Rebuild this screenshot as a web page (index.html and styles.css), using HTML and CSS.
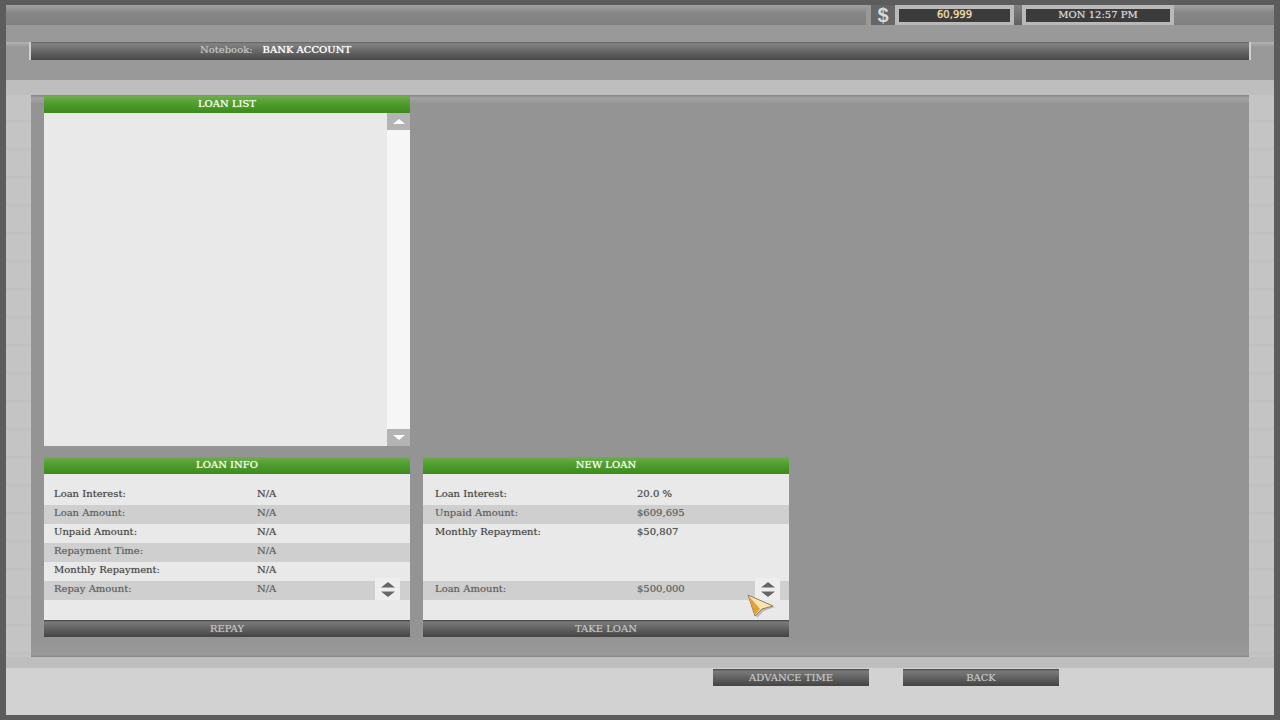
FILE: index.html
```html
<!DOCTYPE html>
<html lang="en">
<head>
  <meta charset="UTF-8" />
  <title>Bank Account</title>
  <link rel="stylesheet" href="styles.css">
</head>
<body>

  <div class="screen">
    <div class="topbar">
      <div class="currency">$</div>
      <div class="status money">60,999</div>
      <div class="status-gap"></div>
      <div class="status clock">MON 12:57 PM</div>
    </div>

    <header class="header">
      <div class="title-row">
        <div class="title-bar">
          <span class="section">Notebook:</span>
          <h1>BANK ACCOUNT</h1>
        </div>
      </div>
    </header>

    <main class="main">
      <div class="board">
        <section class="card card-list">
          <h2>LOAN LIST</h2>
          <div class="list">
            <div class="list-items"></div>
            <div class="scrollbar">
              <button type="button" aria-label="Scroll up"><svg width="12" height="5" viewBox="0 0 12 5"><path d="M6 0L12 5H0Z" fill="#fff"/></svg></button>
              <button type="button" aria-label="Scroll down"><svg width="12" height="5" viewBox="0 0 12 5"><path d="M0 0H12L6 5Z" fill="#fff"/></svg></button>
            </div>
          </div>
        </section>

        <div class="cards">
          <section class="card">
            <h2>LOAN INFO</h2>
            <div class="rows">
              <div class="row"><span>Loan Interest:</span><span>N/A</span></div>
              <div class="row"><span>Loan Amount:</span><span>N/A</span></div>
              <div class="row"><span>Unpaid Amount:</span><span>N/A</span></div>
              <div class="row"><span>Repayment Time:</span><span>N/A</span></div>
              <div class="row"><span>Monthly Repayment:</span><span>N/A</span></div>
              <div class="row">
                <label for="repay-amount">Repay Amount:</label>
                <input type="text" id="repay-amount" value="N/A" />
                <div class="stepper">
                  <button type="button" aria-label="Increase"><svg width="16" height="6" viewBox="0 0 16 6"><path d="M8 0L15 5.5H1Z" fill="#666"/></svg></button>
                  <button type="button" aria-label="Decrease"><svg width="16" height="6" viewBox="0 0 16 6"><path d="M1 .5H15L8 6Z" fill="#666"/></svg></button>
                </div>
              </div>
            </div>
            <button type="button" class="btn">REPAY</button>
          </section>

          <section class="card card-new">
            <h2>NEW LOAN</h2>
            <div class="rows">
              <div class="row"><span>Loan Interest:</span><span>20.0 %</span></div>
              <div class="row"><span>Unpaid Amount:</span><span>$609,695</span></div>
              <div class="row"><span>Monthly Repayment:</span><span>$50,807</span></div>
              <div class="row"></div>
              <div class="row"></div>
              <div class="row">
                <label for="loan-amount">Loan Amount:</label>
                <input type="text" id="loan-amount" value="$500,000" />
                <div class="stepper">
                  <button type="button" aria-label="Increase"><svg width="16" height="6" viewBox="0 0 16 6"><path d="M8 0L15 5.5H1Z" fill="#666"/></svg></button>
                  <button type="button" aria-label="Decrease"><svg width="16" height="6" viewBox="0 0 16 6"><path d="M1 .5H15L8 6Z" fill="#666"/></svg></button>
                </div>
              </div>
            </div>
            <button type="button" class="btn">TAKE LOAN</button>

            <svg class="cursor" width="30" height="26" viewBox="0 0 30 26">
              <defs>
                <linearGradient id="gold" x1="0" y1="0" x2="0" y2="1">
                  <stop offset="0" stop-color="#d9a253"/>
                  <stop offset="1" stop-color="#e89c28"/>
                </linearGradient>
              </defs>
              <path d="M2 4L28 14L17 18L10 25Z" fill="#666" opacity=".35"/>
              <path d="M1 2L26 13L15 16L8 23Z" fill="#fbe3ac" stroke="#8f7d60" stroke-width="1"/>
              <path d="M1 2L13 16L8 22Z" fill="url(#gold)"/>
            </svg>
          </section>
        </div>
      </div>
    </main>

    <footer class="footer">
      <button type="button" class="btn">ADVANCE TIME</button>
      <button type="button" class="btn">BACK</button>
    </footer>
  </div>

</body>
</html>
```
FILE: styles.css
```css
* {
  box-sizing: border-box;
}

body {
  margin: 0;
  font-family: 'DejaVu Serif', serif;
  font-size: 10px;
  color: #484848;
}

h1, h2 {
  margin: 0;
  font-size: 10px;
  font-weight: normal;
}

button, input {
  margin: 0;
  padding: 0;
  border: none;
  background: none;
  font: inherit;
  color: inherit;
  text-shadow: inherit;
}

.screen {
  display: flex;
  flex-direction: column;
  min-height: 100vh;
  border: solid #5c5c5c;
  border-width: 5px 6px;
}

/* top bar */
.topbar {
  display: flex;
  justify-content: flex-end;
  height: 20px;
  padding-right: 100px;
  background: linear-gradient(#a2a2a2, #868686 8px, #808080);
}

.currency {
  width: 29px;
  border-left: 5px solid #999;
  background: #666;
  color: #d8d8d8;
  font: bold 20px/21px 'Liberation Sans', sans-serif;
  text-align: center;
}

.status {
  width: 119px;
  border: solid #b9b9b9;
  border-width: 4px 4px 3px;
  background: #3b3b3b;
  color: #d6d6d6;
  line-height: 12px;
  text-align: center;
  text-shadow: 0 0 1px #aaa;
}

.money {
  color: #ead7a6;
  font-family: 'DejaVu Sans', sans-serif;
  text-shadow: 0 0 1px #ead7a6;
}

.clock {
  width: 152px;
}

.status-gap {
  width: 8px;
  background: linear-gradient(#808080, #606060);
}

/* header */
.header {
  height: 55px;
  padding-top: 17px;
  background: #999;
}

.title-row {
  padding: 0 23px;
  background: linear-gradient(#b2b2b2, #999 5px);
}

.title-bar {
  display: flex;
  gap: 10px;
  height: 18px;
  padding-left: 169px;
  border: solid #d0d0d0;
  border-width: 0 2px;
  background: linear-gradient(#626262, #828282 2px, #6b6b6b 8px, #484848);
  color: #c8c8c8;
  line-height: 16px;
  text-shadow: 0 0 1px #999;
}

.title-bar h1 {
  color: #fff;
  text-shadow: 0 0 1px #fff;
}

/* content */
.main {
  display: flex;
  flex: 1;
  padding: 15px 25px 11px;
  background:
    linear-gradient(#bebebe, #bebebe) top / 100% 15px no-repeat,
    linear-gradient(#bebebe, #bebebe) bottom / 100% 11px no-repeat,
    repeating-linear-gradient(#c4c4c4 0, #c4c4c4 11px, #bebebe 13px, #c4c4c4 15px, #c4c4c4 28px);
}

.board {
  display: flex;
  flex: 1;
  flex-direction: column;
  gap: 11px;
  padding: 1px 13px 20px;
  background:
    linear-gradient(#848484, #a4a4a4 3px, rgba(148, 148, 148, 0) 9px) top / 100% 10px no-repeat,
    linear-gradient(#949494, #9a9a9a 18px, #848484) bottom / 100% 20px no-repeat,
    #949494;
}

.card {
  display: flex;
  flex-direction: column;
  position: relative;
  width: 366px;
  background: #e9e9e9;
}

.card h2 {
  height: 17px;
  background: linear-gradient(#72ac50, #54a032 6px, #3d8a1c);
  color: #f0ffe8;
  line-height: 16px;
  text-align: center;
  text-shadow: 0 0 1px #e0f5d4;
}

.card-list {
  flex: 1;
}

.list {
  display: flex;
  flex: 1;
}

.list-items {
  flex: 1;
}

.scrollbar {
  display: flex;
  flex-direction: column;
  justify-content: space-between;
  width: 23px;
  background: #f6f6f6;
}

.scrollbar button {
  display: flex;
  align-items: center;
  justify-content: center;
  height: 17px;
  background: #b4b4b4;
}

.cards {
  display: flex;
  gap: 13px;
}

.rows {
  padding: 12px 0 20px;
  text-shadow: 0 0 1px #999;
}

.row {
  display: grid;
  grid-template-columns: 203px 1fr 35px;
  height: 19px;
  padding-left: 10px;
  line-height: 15px;
}

.card-new .row {
  grid-template-columns: 202px 1fr 34px;
  padding-left: 12px;
}

.row:nth-child(even) {
  background: #cfcfcf;
  color: #606060;
}

.row input {
  width: 100%;
  height: 15px;
}

.card-new .row:nth-child(4) {
  background: none;
}

.stepper {
  display: flex;
  flex-direction: column;
  align-items: center;
  justify-content: center;
  gap: 3px;
  width: 25px;
  height: 22px;
  margin-top: -3px;
  background: #eee;
}

.stepper button {
  display: block;
  height: 6px;
}

.stepper svg {
  display: block;
}

.btn {
  height: 17px;
  background: linear-gradient(#404040, #7a7a7a 2px, #646464 8px, #444);
  color: #c6c6c6;
  line-height: 16px;
  text-align: center;
  text-shadow: 0 0 1px #999;
  cursor: pointer;
}

.cursor {
  position: absolute;
  right: 12px;
  bottom: 18px;
}

/* footer */
.footer {
  display: flex;
  justify-content: flex-end;
  gap: 34px;
  height: 47px;
  padding: 1px 215px 0 0;
  background: #d2d2d2;
}

.footer .btn {
  width: 156px;
}
```
